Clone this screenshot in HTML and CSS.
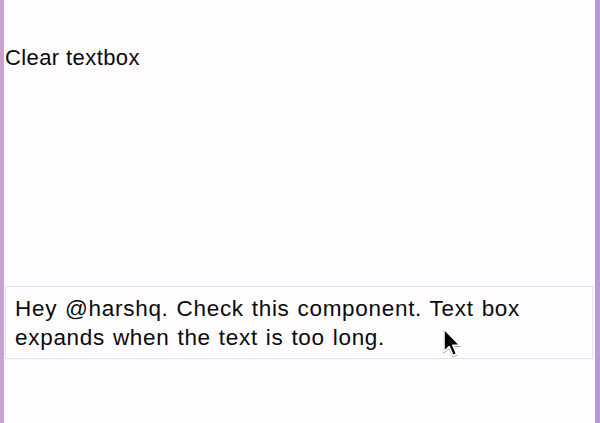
FILE: index.html
```html
<!DOCTYPE html>
<html>
<head>
<meta charset="utf-8">
<link rel="stylesheet" href="styles.css">
</head>
<body>
<div class="frame">
  <div class="page">
    <div class="clear">Clear textbox</div>
    <div class="spacer"></div>
    <div class="textbox">Hey @harshq. Check this component. Text box expands when the text is too long.</div>
  </div>
  <svg class="cursor" width="20" height="31" viewBox="0 0 20 31">
    <path d="M2 2 L2 24.5 L7.2 19.6 L11 28.5 L14.6 27 L10.8 18.3 L17.8 18.3 Z" fill="#000" stroke="#fff" stroke-width="1.6" stroke-linejoin="round" style="filter: drop-shadow(0.5px 1px 0.6px rgba(0,0,0,0.35))"/>
  </svg>
</div>
</body>
</html>
```
FILE: styles.css
```css
html, body {
  margin: 0;
  padding: 0;
  width: 600px;
  height: 423px;
  overflow: hidden;
}
body {
  background: #fdfbfd;
  font-family: "Liberation Sans", Arial, sans-serif;
  color: #0a0a0a;
}
.frame {
  position: relative;
  box-sizing: border-box;
  width: 600px;
  height: 423px;
  border-left: 4px solid #c8a2d2;
  border-right: 5px solid #b79ad6;
  padding-left: 1px;
  padding-right: 3px;
}
.page {
  display: flex;
  flex-direction: column;
  height: 100%;
  background: #fefcfe;
}
.clear {
  margin-top: 45px;
  font-size: 22px;
  line-height: 26px;
  letter-spacing: 0.4px;
}
.spacer {
  height: 215px;
}
.textbox {
  box-sizing: border-box;
  width: 588px;
  border: 1px solid #e4e2e6;
  background: #fffdff;
  padding: 7px 9px 6px 9px;
  font-size: 22.5px;
  line-height: 29px;
  letter-spacing: 0.7px;
  word-spacing: 1px;
}
.cursor {
  position: absolute;
  left: 438px;
  top: 327px;
}
```
